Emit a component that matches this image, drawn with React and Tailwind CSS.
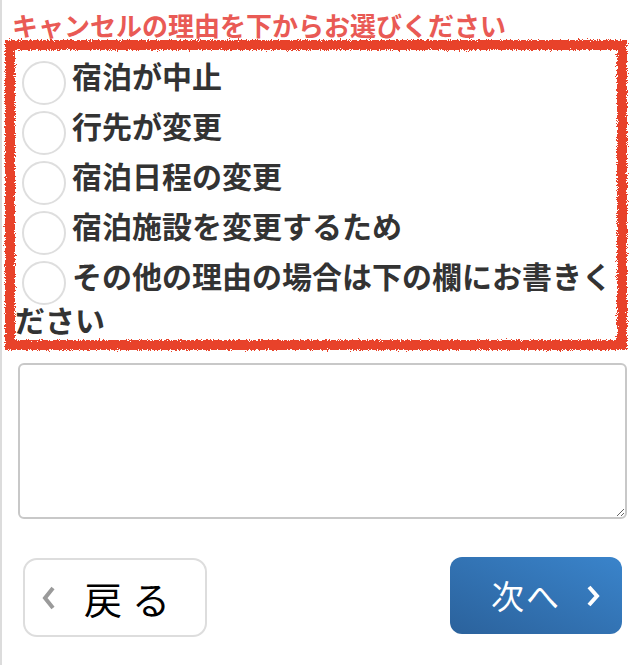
import React from 'react';

const REASONS = [
  '宿泊が中止',
  '行先が変更',
  '宿泊日程の変更',
  '宿泊施設を変更するため',
  'その他の理由の場合は下の欄にお書きください',
];

export default function App() {
  return (
    <div className="min-h-[665px] w-[642px] bg-white border-l-2 border-[#dcdcdc] font-['Noto_Sans_CJK_JP','Noto_Sans',sans-serif] text-[#333]">
      {/* crayon filter for the red frame */}
      <svg width="0" height="0" className="absolute">
        <filter id="crayon">
          <feTurbulence type="fractalNoise" baseFrequency="1.1" numOctaves="3" seed="5" result="noise" />
          <feDisplacementMap in="SourceGraphic" in2="noise" scale="6" xChannelSelector="R" yChannelSelector="G" />
        </filter>
      </svg>

      <h2 className="pl-[10px] pt-[10px] text-[26px] leading-[30px] font-bold text-[#e95a55]">
        キャンセルの理由を下からお選びください
      </h2>

      <div className="relative ml-[3px] w-[622px] pl-[10px] pr-[8px] pt-[13px] pb-[3px]">
        {REASONS.map((r, i) => (
          <label
            key={i}
            className="block text-[30px] leading-[44px] font-bold text-[#333] mb-[6px] last:mb-0 cursor-pointer"
          >
            <span className="inline-block w-[44px] h-[44px] -my-[12px] ml-[7px] mr-[6px] rounded-full border-2 border-[#dedede] bg-white align-middle relative top-[3px]"></span>
            {r}
          </label>
        ))}
        <div className="pointer-events-none absolute inset-0 border-[10px] border-[#e8432b] [filter:url(#crayon)]"></div>
      </div>

      <textarea className="block mt-[13px] ml-[16px] w-[609px] h-[156px] rounded-[6px] border-2 border-[#c8c8c8] bg-white outline-none"></textarea>

      <div className="flex justify-between items-start mt-[38px] pl-[21px] pr-[20px]">
        <button className="mt-[1px] w-[184px] h-[79px] rounded-[14px] border-2 border-[#dddddd] bg-white flex items-center pl-[17px]">
          <svg width="14" height="26" viewBox="0 0 14 26" className="shrink-0">
            <polyline points="11,3 3,13 11,23" fill="none" stroke="#9a9a9a" strokeWidth="4" />
          </svg>
          <span className="ml-[28px] text-[38px] leading-none font-normal text-black tracking-[10px]">戻る</span>
        </button>
        <button className="w-[172px] h-[77px] rounded-[12px] bg-gradient-to-tr from-[#2b629c] to-[#3a84cb] flex items-center pl-[41px]">
          <span className="text-[33px] leading-none font-normal text-white tracking-[2px]">次へ</span>
          <svg width="16" height="24" viewBox="0 0 16 24" className="ml-[24px] shrink-0">
            <polyline points="4,3 12,12 4,21" fill="none" stroke="#ffffff" strokeWidth="4" />
          </svg>
        </button>
      </div>
    </div>
  );
}
